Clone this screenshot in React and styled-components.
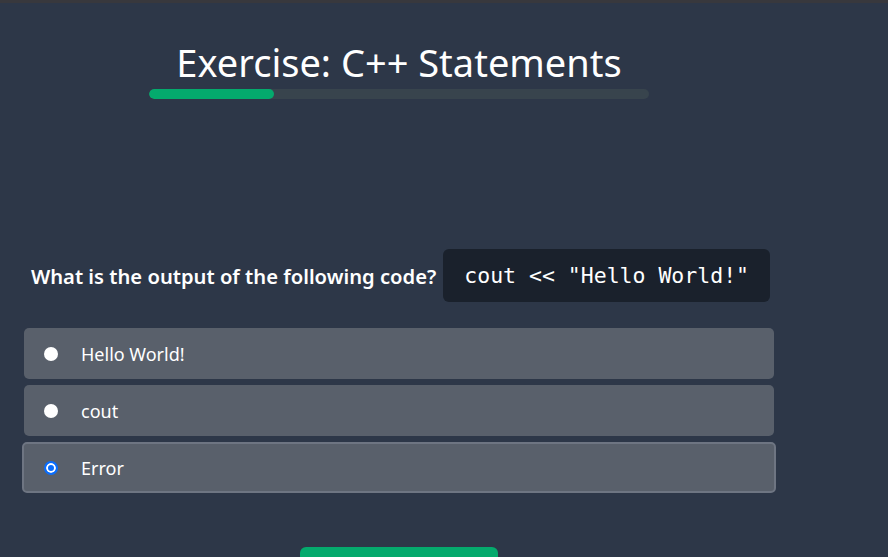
import React, { useState } from 'react';
import styled, { createGlobalStyle } from 'styled-components';

const Global = createGlobalStyle`
  html, body {
    margin: 0;
    padding: 0;
    background: #2d3748;
    height: 100%;
    overflow: hidden;
  }
  body {
    box-sizing: border-box;
    border-top: 3px solid #38383d;
    font-family: "Noto Sans", "Open Sans", sans-serif;
    color: #fff;
  }
`

const Page = styled.div`
  width: 750px;
  margin-left: 24px;
  display: flex;
  flex-direction: column;
  align-items: center;

  & > * {
    flex-shrink: 0;
  }
`

const Title = styled.h1`
  margin: 34px 0 0;
  font-size: 38px;
  font-weight: 400;
  line-height: 50px;
`

const Track = styled.div`
  width: 500px;
  height: 10px;
  border-radius: 5px;
  background: #38444d;
  margin-top: 2px;
  overflow: hidden;
`

const Fill = styled.div`
  height: 100%;
  border-radius: 5px;
  background: #04aa6d;
`

const Question = styled.div`
  align-self: stretch;
  display: flex;
  align-items: center;
  gap: 7px;
  margin-top: 150px;
  padding-left: 7px;
`

const Ask = styled.span`
  font-family: "Noto Sans", "Open Sans", sans-serif;
  font-weight: 600;
  font-size: 20.2px;
`

const Code = styled.code`
  background: #1a212c;
  border-radius: 6px;
  padding: 0 21px;
  height: 53px;
  display: flex;
  align-items: center;
  font-family: "DejaVu Sans Mono", "Liberation Mono", monospace;
  font-size: 21.5px;
  color: #fff;
`

const Options = styled.div`
  align-self: stretch;
  display: flex;
  flex-direction: column;
  gap: 6px;
  margin-top: 26px;
`

const Option = styled.label`
  display: flex;
  align-items: center;
  height: 51px;
  background: #59606b;
  border-radius: 5px;
  box-sizing: border-box;
  cursor: pointer;
  border: ${p => (p.$on ? '2px solid #6e7582' : 'none')};
  margin: ${p => (p.$on ? '0 -2px' : '0')};
  padding-left: ${p => (p.$on ? '20px' : '20px')};
  font-size: 18px;
  color: #fff;
`

const Radio = styled.span`
  width: 14px;
  height: 14px;
  border-radius: 50%;
  box-sizing: border-box;
  flex-shrink: 0;
  margin-right: 23px;
  background: ${p => (p.$on ? '#0a6dfc' : '#fff')};
  border: ${p => (p.$on ? '2px solid #0a6dfc' : 'none')};
  box-shadow: ${p => (p.$on ? 'inset 0 0 0 2px #fff' : 'none')};
`

const Submit = styled.button`
  margin-top: 54px;
  width: 198px;
  height: 48px;
  border: none;
  border-radius: 6px;
  background: #04aa6d;
  color: #fff;
  font-family: "Noto Sans", sans-serif;
  font-size: 18px;
`

const answers = ['Hello World!', 'cout', 'Error']

export default function App() {
  const [picked, setPicked] = useState(2)
  return (
    <>
      <Global />
      <Page>
        <Title>Exercise: C++ Statements</Title>
        <Track>
          <Fill style={{ width: '25%' }} />
        </Track>
        <Question>
          <Ask>What is the output of the following code?</Ask>
          <Code>cout &lt;&lt; "Hello World!"</Code>
        </Question>
        <Options>
          {answers.map((a, i) => (
            <Option key={a} $on={picked === i} onClick={() => setPicked(i)}>
              <Radio $on={picked === i} />
              {a}
            </Option>
          ))}
        </Options>
        <Submit>Submit Answer</Submit>
      </Page>
    </>
  )
}
